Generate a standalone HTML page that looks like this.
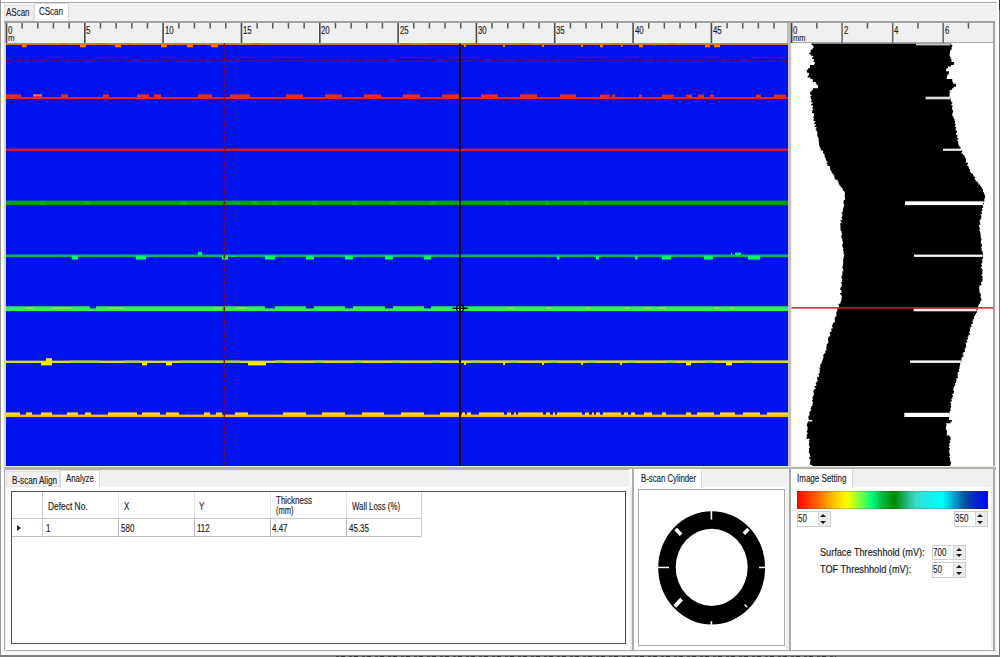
<!DOCTYPE html>
<html><head><meta charset="utf-8"><title>CScan</title>
<style>
html,body{margin:0;padding:0;}
body{width:1000px;height:657px;overflow:hidden;background:#f0f0f0;position:relative;font-family:"Liberation Sans",sans-serif;color:#1a1a1a;}
.a{position:absolute;}
.t{position:absolute;white-space:nowrap;font-size:11px;line-height:12px;transform:scaleX(var(--s,.727));transform-origin:0 50%;color:#1c1c1c;-webkit-text-stroke:.16px #222;}
.rl{position:absolute;top:24.6px;white-space:nowrap;font-size:10.6px;line-height:10px;transform:scaleX(.74);transform-origin:0 50%;color:#1c1c1c;-webkit-text-stroke:.15px #1c1c1c;}
.lb{position:absolute;white-space:nowrap;font-size:11.2px;line-height:13px;transform:scaleX(.818);transform-origin:0 50%;color:#1c1c1c;-webkit-text-stroke:.2px #1c1c1c;}
.num{position:absolute;height:15.6px;background:#fff;border:1px solid #cfcfcf;box-sizing:border-box;}
.num .v{position:absolute;left:.1px;top:.2px;font-size:11px;line-height:12px;transform:scaleX(.73);transform-origin:0 50%;color:#1c1c1c;-webkit-text-stroke:.16px #222;}
.num .sp{position:absolute;right:0;top:0;bottom:0;width:11px;background:#ececec;border-left:1px solid #d8d8d8;}
.num .sp:before{content:"";position:absolute;left:1.9px;top:2.2px;border:3.2px solid transparent;border-top:0;border-bottom:3.6px solid #1a1a1a;}
.num .sp:after{content:"";position:absolute;left:1.9px;bottom:2.2px;border:3.2px solid transparent;border-bottom:0;border-top:3.6px solid #1a1a1a;}
</style></head><body>
<!-- window frame -->
<div class="a" style="left:0;top:0;width:1000px;height:1.8px;background:#fff"></div>
<div class="a" style="left:0;top:1.5px;width:997px;height:1.4px;background:#a4a4a4"></div><div class="a" style="left:1px;top:2.9px;width:996px;height:1.4px;background:#fafafa"></div>
<div class="a" style="left:0;top:0;width:1px;height:657px;background:#9a9a9a"></div>
<div class="a" style="left:1px;top:3px;width:3.2px;height:652px;background:#fafafa"></div>
<div class="a" style="left:998.5px;top:0;width:1.5px;height:657px;background:#727272"></div><div class="a" style="left:998.5px;top:0;width:1.5px;height:10px;background:#2a3050"></div><div class="a" style="left:997px;top:0;width:1.5px;height:657px;background:#fdfdfd"></div>
<div class="a" style="left:995.6px;top:22px;width:2.6px;height:633px;background:#fafafa"></div>
<!-- top tabs -->
<div class="a" style="left:3.6px;top:4.8px;width:30.4px;height:16.7px;border:1px solid #e2e2e2;box-sizing:border-box;background:#f0f0f0"></div>
<div class="a" style="left:34px;top:3.2px;width:35.4px;height:18.3px;background:#fff;border:1px solid #dadada;border-bottom:0;box-sizing:border-box"></div>
<span class="t" style="left:6.3px;top:6.4px">AScan</span>
<span class="t" style="left:39.3px;top:4.6px">CScan</span>
<!-- tab page border -->
<div class="a" style="left:4.2px;top:21.2px;width:990.4px;height:2.3px;background:#a2a2a2"></div>
<div class="a" style="left:4.2px;top:23.4px;width:1.6px;height:444.6px;background:#d6d6cc"></div>

<!-- rulers + scans -->
<div class="a" style="left:787.2px;top:23px;width:1.2px;height:20px;background:#b4b4b4"></div>
<div class="a" style="left:788.4px;top:22.6px;width:3px;height:445.4px;background:#c2c2b8"></div>
<div class="a" style="left:791.6px;top:43.4px;width:201.6px;height:424.4px;background:#fff"></div>
<div class="a" style="left:993px;top:23px;width:1.9px;height:446px;background:#a6a6a6"></div>
<div class="a" style="left:791px;top:42.4px;width:202px;height:1.1px;background:#a8a8a8"></div>
<svg class="a" style="left:0;top:0" width="1000" height="470" viewBox="0 0 1000 470">
<rect x="5.7" y="23" width="1.6" height="20" fill="#4c4c4c"/><rect x="21.4" y="23" width="1.5" height="5.5" fill="#585858"/><rect x="37.1" y="23" width="1.5" height="5.5" fill="#585858"/><rect x="52.7" y="23" width="1.5" height="5.5" fill="#585858"/><rect x="68.4" y="23" width="1.5" height="5.5" fill="#585858"/><rect x="84.0" y="23" width="1.6" height="20" fill="#4c4c4c"/><rect x="99.7" y="23" width="1.5" height="5.5" fill="#585858"/><rect x="115.4" y="23" width="1.5" height="5.5" fill="#585858"/><rect x="131.1" y="23" width="1.5" height="5.5" fill="#585858"/><rect x="146.7" y="23" width="1.5" height="5.5" fill="#585858"/><rect x="162.3" y="23" width="1.6" height="20" fill="#4c4c4c"/><rect x="178.1" y="23" width="1.5" height="5.5" fill="#585858"/><rect x="193.7" y="23" width="1.5" height="5.5" fill="#585858"/><rect x="209.4" y="23" width="1.5" height="5.5" fill="#585858"/><rect x="225.0" y="23" width="1.5" height="5.5" fill="#585858"/><rect x="240.7" y="23" width="1.6" height="20" fill="#4c4c4c"/><rect x="256.4" y="23" width="1.5" height="5.5" fill="#585858"/><rect x="272.0" y="23" width="1.5" height="5.5" fill="#585858"/><rect x="287.7" y="23" width="1.5" height="5.5" fill="#585858"/><rect x="303.4" y="23" width="1.5" height="5.5" fill="#585858"/><rect x="319.0" y="23" width="1.6" height="20" fill="#4c4c4c"/><rect x="334.7" y="23" width="1.5" height="5.5" fill="#585858"/><rect x="350.4" y="23" width="1.5" height="5.5" fill="#585858"/><rect x="366.0" y="23" width="1.5" height="5.5" fill="#585858"/><rect x="381.7" y="23" width="1.5" height="5.5" fill="#585858"/><rect x="397.3" y="23" width="1.6" height="20" fill="#4c4c4c"/><rect x="413.0" y="23" width="1.5" height="5.5" fill="#585858"/><rect x="428.7" y="23" width="1.5" height="5.5" fill="#585858"/><rect x="444.3" y="23" width="1.5" height="5.5" fill="#585858"/><rect x="460.0" y="23" width="1.5" height="5.5" fill="#585858"/><rect x="475.6" y="23" width="1.6" height="20" fill="#4c4c4c"/><rect x="491.3" y="23" width="1.5" height="5.5" fill="#585858"/><rect x="507.0" y="23" width="1.5" height="5.5" fill="#585858"/><rect x="522.7" y="23" width="1.5" height="5.5" fill="#585858"/><rect x="538.3" y="23" width="1.5" height="5.5" fill="#585858"/><rect x="553.9" y="23" width="1.6" height="20" fill="#4c4c4c"/><rect x="569.7" y="23" width="1.5" height="5.5" fill="#585858"/><rect x="585.3" y="23" width="1.5" height="5.5" fill="#585858"/><rect x="601.0" y="23" width="1.5" height="5.5" fill="#585858"/><rect x="616.6" y="23" width="1.5" height="5.5" fill="#585858"/><rect x="632.3" y="23" width="1.6" height="20" fill="#4c4c4c"/><rect x="648.0" y="23" width="1.5" height="5.5" fill="#585858"/><rect x="663.6" y="23" width="1.5" height="5.5" fill="#585858"/><rect x="679.3" y="23" width="1.5" height="5.5" fill="#585858"/><rect x="695.0" y="23" width="1.5" height="5.5" fill="#585858"/><rect x="710.6" y="23" width="1.6" height="20" fill="#4c4c4c"/><rect x="726.3" y="23" width="1.5" height="5.5" fill="#585858"/><rect x="742.0" y="23" width="1.5" height="5.5" fill="#585858"/><rect x="757.6" y="23" width="1.5" height="5.5" fill="#585858"/><rect x="773.3" y="23" width="1.5" height="5.5" fill="#585858"/><rect x="790.8" y="23" width="1.6" height="20" fill="#3c3c3c"/><rect x="816.1" y="23" width="1.5" height="5.5" fill="#585858"/><rect x="841.3" y="23" width="1.6" height="20" fill="#6c6c6c"/><rect x="866.7" y="23" width="1.5" height="5.5" fill="#585858"/><rect x="891.9" y="23" width="1.6" height="20" fill="#6c6c6c"/><rect x="917.2" y="23" width="1.5" height="5.5" fill="#585858"/><rect x="942.4" y="23" width="1.6" height="20" fill="#6c6c6c"/><rect x="967.7" y="23" width="1.5" height="5.5" fill="#585858"/>
<rect x="6.0" y="43.6" width="782.0" height="422.79999999999995" fill="#0012ee"/><rect x="6.0" y="43.0" width="782.0" height="1.9" fill="#d68a14"/><rect x="60.0" y="43.0" width="8.0" height="1.9" fill="#dc6a1c"/><rect x="97.0" y="43.0" width="11.0" height="1.9" fill="#dc6a1c"/><rect x="125.0" y="43.0" width="6.0" height="1.9" fill="#dc6a1c"/><rect x="251.0" y="43.0" width="11.0" height="1.9" fill="#dc6a1c"/><rect x="400.0" y="43.0" width="12.0" height="1.9" fill="#dc6a1c"/><rect x="426.0" y="43.0" width="32.0" height="1.9" fill="#dc6a1c"/><rect x="470.0" y="43.0" width="10.0" height="1.9" fill="#dc6a1c"/><rect x="520.0" y="43.0" width="10.0" height="1.9" fill="#dc6a1c"/><rect x="612.0" y="43.0" width="8.0" height="1.9" fill="#dc6a1c"/><rect x="668.0" y="43.0" width="8.0" height="1.9" fill="#dc6a1c"/><rect x="22.0" y="44.8" width="4.5" height="2.5" fill="#ff7a00"/><rect x="80.0" y="44.8" width="6.0" height="2.5" fill="#ff7a00"/><rect x="115.0" y="44.8" width="6.0" height="2.5" fill="#ff7a00"/><rect x="161.0" y="44.8" width="6.0" height="2.5" fill="#ff7a00"/><rect x="187.0" y="44.8" width="6.0" height="2.5" fill="#ff7a00"/><rect x="211.0" y="44.8" width="7.0" height="2.5" fill="#ff7a00"/><rect x="600.0" y="44.8" width="3.0" height="2.5" fill="#ff7a00"/><rect x="639.0" y="44.8" width="4.0" height="2.5" fill="#ff7a00"/><rect x="705.0" y="44.8" width="5.0" height="2.5" fill="#ff7a00"/><rect x="714.0" y="44.8" width="6.0" height="2.5" fill="#ff7a00"/><rect x="464.0" y="44.8" width="2.0" height="2.2" fill="#ff7a00"/><rect x="503.0" y="44.8" width="2.0" height="2.2" fill="#ff7a00"/><rect x="542.0" y="44.8" width="2.0" height="2.2" fill="#ff7a00"/><rect x="581.0" y="44.8" width="2.0" height="2.2" fill="#ff7a00"/><rect x="621.0" y="44.8" width="1.5" height="2.2" fill="#ff7a00"/><line x1="6.0" y1="61.3" x2="788.0" y2="61.3" stroke="#9a0010" stroke-width="1.6" stroke-dasharray="4.4 1.6 1.45 1.65 1.45 1.6"/><rect x="6.0" y="97.1" width="782.0" height="1.9" fill="#e02828"/><rect x="6.0" y="94.4" width="15.0" height="3.2" fill="#ff2a00"/><rect x="33.0" y="94.4" width="9.0" height="3.2" fill="#ff2a00"/><rect x="61.0" y="94.4" width="7.0" height="3.2" fill="#ff2a00"/><rect x="103.0" y="94.4" width="6.0" height="3.2" fill="#ff2a00"/><rect x="137.0" y="94.4" width="12.0" height="3.2" fill="#ff2a00"/><rect x="154.0" y="94.4" width="7.0" height="3.2" fill="#ff2a00"/><rect x="198.0" y="94.4" width="14.0" height="3.2" fill="#ff2a00"/><rect x="230.0" y="94.4" width="20.0" height="3.2" fill="#ff2a00"/><rect x="286.0" y="94.4" width="17.0" height="3.2" fill="#ff2a00"/><rect x="325.0" y="94.4" width="17.0" height="3.2" fill="#ff2a00"/><rect x="364.0" y="94.4" width="17.0" height="3.2" fill="#ff2a00"/><rect x="403.0" y="94.4" width="17.0" height="3.2" fill="#ff2a00"/><rect x="442.0" y="94.4" width="17.0" height="3.2" fill="#ff2a00"/><rect x="481.0" y="94.4" width="17.0" height="3.2" fill="#ff2a00"/><rect x="520.0" y="94.4" width="17.0" height="3.2" fill="#ff2a00"/><rect x="560.0" y="94.4" width="16.0" height="3.2" fill="#ff2a00"/><rect x="600.0" y="94.6" width="10.0" height="3.0" fill="#ff2a00"/><rect x="612.0" y="94.6" width="3.0" height="3.0" fill="#ff2a00"/><rect x="639.0" y="94.6" width="3.0" height="3.0" fill="#ff2a00"/><rect x="662.0" y="94.6" width="12.0" height="3.0" fill="#ff2a00"/><rect x="686.0" y="94.6" width="6.0" height="3.0" fill="#ff2a00"/><rect x="698.0" y="94.6" width="6.0" height="3.0" fill="#ff2a00"/><rect x="710.0" y="94.6" width="4.0" height="3.0" fill="#ff2a00"/><rect x="756.0" y="94.6" width="5.0" height="3.0" fill="#ff2a00"/><rect x="774.0" y="94.6" width="12.0" height="3.0" fill="#ff2a00"/><rect x="33.0" y="94.4" width="9.0" height="1.6" fill="#ff7800"/><rect x="6.0" y="148.5" width="782.0" height="2.5" fill="#d81432"/><rect x="6.0" y="200.6" width="782.0" height="4.5" fill="#00a00c"/><rect x="40.0" y="201.0" width="6.0" height="3.6" fill="#06ae22"/><rect x="84.0" y="201.0" width="6.0" height="3.6" fill="#06ae22"/><rect x="180.0" y="201.0" width="7.0" height="3.6" fill="#06ae22"/><rect x="232.0" y="201.0" width="8.0" height="3.6" fill="#06ae22"/><rect x="252.0" y="201.0" width="6.0" height="3.6" fill="#06ae22"/><rect x="272.0" y="201.0" width="6.0" height="3.6" fill="#06ae22"/><rect x="312.0" y="201.0" width="6.0" height="3.6" fill="#06ae22"/><rect x="352.0" y="201.0" width="6.0" height="3.6" fill="#06ae22"/><rect x="390.0" y="201.0" width="6.0" height="3.6" fill="#06ae22"/><rect x="430.0" y="201.0" width="6.0" height="3.6" fill="#06ae22"/><rect x="505.0" y="201.0" width="4.0" height="3.6" fill="#06ae22"/><rect x="545.0" y="201.0" width="4.0" height="3.6" fill="#06ae22"/><rect x="584.0" y="201.0" width="4.0" height="3.6" fill="#06ae22"/><rect x="6.0" y="254.5" width="782.0" height="2.6" fill="#04b85c"/><rect x="72.0" y="255.6" width="6.0" height="4.0" fill="#00f866"/><rect x="136.0" y="255.6" width="10.0" height="4.0" fill="#00f866"/><rect x="222.0" y="255.6" width="6.0" height="4.0" fill="#00f866"/><rect x="265.0" y="255.6" width="10.0" height="4.0" fill="#00f866"/><rect x="306.0" y="255.6" width="8.0" height="4.0" fill="#00f866"/><rect x="345.0" y="255.6" width="8.0" height="4.0" fill="#00f866"/><rect x="385.0" y="255.6" width="8.0" height="4.0" fill="#00f866"/><rect x="424.0" y="255.6" width="7.0" height="4.0" fill="#00f866"/><rect x="557.0" y="255.6" width="2.5" height="4.0" fill="#00f866"/><rect x="596.0" y="255.6" width="3.0" height="4.0" fill="#00f866"/><rect x="635.0" y="255.6" width="2.5" height="4.0" fill="#00f866"/><rect x="662.0" y="255.6" width="9.0" height="4.0" fill="#00f866"/><rect x="704.0" y="255.6" width="9.0" height="4.0" fill="#00f866"/><rect x="748.0" y="255.6" width="12.0" height="4.0" fill="#00f866"/><rect x="198.0" y="251.8" width="4.0" height="3.6" fill="#00f866"/><rect x="735.0" y="252.6" width="6.0" height="2.6" fill="#00f866"/><rect x="731.0" y="252.6" width="1.3" height="2.6" fill="#00f866"/><rect x="6.0" y="306.3" width="782.0" height="4.8" fill="#30f05a"/><rect x="90.0" y="306.0" width="6.0" height="2.4" fill="#0012ee"/><rect x="265.0" y="306.0" width="10.0" height="2.4" fill="#0012ee"/><rect x="306.0" y="306.0" width="8.0" height="2.4" fill="#0012ee"/><rect x="345.0" y="306.0" width="8.0" height="2.4" fill="#0012ee"/><rect x="385.0" y="306.0" width="8.0" height="2.4" fill="#0012ee"/><rect x="424.0" y="306.0" width="7.0" height="2.4" fill="#0012ee"/><rect x="25.0" y="307.4" width="8.0" height="1.6" fill="#8ae84a"/><rect x="52.0" y="307.4" width="20.0" height="1.6" fill="#8ae84a"/><rect x="108.0" y="307.4" width="16.0" height="1.6" fill="#8ae84a"/><rect x="215.0" y="307.4" width="7.0" height="1.6" fill="#8ae84a"/><rect x="236.0" y="307.4" width="11.0" height="1.6" fill="#8ae84a"/><rect x="508.0" y="307.4" width="5.0" height="1.6" fill="#8ae84a"/><rect x="546.0" y="307.4" width="6.0" height="1.6" fill="#8ae84a"/><rect x="586.0" y="307.4" width="5.0" height="1.6" fill="#8ae84a"/><rect x="624.0" y="307.4" width="6.0" height="1.6" fill="#8ae84a"/><rect x="644.0" y="307.4" width="8.0" height="1.6" fill="#8ae84a"/><rect x="657.0" y="307.4" width="9.0" height="1.6" fill="#8ae84a"/><rect x="714.0" y="307.4" width="6.0" height="1.6" fill="#8ae84a"/><rect x="730.0" y="307.4" width="5.0" height="1.6" fill="#8ae84a"/><rect x="6.0" y="360.6" width="782.0" height="2.4" fill="#d6dc2c"/><rect x="275" y="360.6" width="513.0" height="2.4" fill="#dcd626"/><rect x="275.6" y="360.6" width="8.0" height="2.4" fill="#9ccc50"/><rect x="314.7" y="360.6" width="8.0" height="2.4" fill="#9ccc50"/><rect x="353.8" y="360.6" width="8.0" height="2.4" fill="#9ccc50"/><rect x="392.9" y="360.6" width="8.0" height="2.4" fill="#9ccc50"/><rect x="432.0" y="360.6" width="8.0" height="2.4" fill="#9ccc50"/><rect x="471.1" y="360.6" width="8.0" height="2.4" fill="#9ccc50"/><rect x="510.2" y="360.6" width="8.0" height="2.4" fill="#9ccc50"/><rect x="549.3" y="360.6" width="8.0" height="2.4" fill="#9ccc50"/><rect x="588.4" y="360.6" width="8.0" height="2.4" fill="#9ccc50"/><rect x="627.5" y="360.6" width="8.0" height="2.4" fill="#9ccc50"/><rect x="666.6" y="360.6" width="8.0" height="2.4" fill="#9ccc50"/><rect x="705.7" y="360.6" width="8.0" height="2.4" fill="#9ccc50"/><rect x="744.8" y="360.6" width="8.0" height="2.4" fill="#9ccc50"/><rect x="70.0" y="360.6" width="30.0" height="2.4" fill="#a8d048"/><rect x="125.0" y="360.6" width="15.0" height="2.4" fill="#a8d048"/><rect x="180.0" y="360.6" width="60.0" height="2.4" fill="#a8d048"/><rect x="41.0" y="362.4" width="11.0" height="3.0" fill="#ffe800"/><rect x="142.0" y="362.4" width="5.0" height="3.0" fill="#ffe800"/><rect x="166.0" y="362.4" width="6.0" height="3.0" fill="#ffe800"/><rect x="248.0" y="362.4" width="18.0" height="3.0" fill="#ffe800"/><rect x="686.0" y="362.4" width="5.0" height="3.0" fill="#ffe800"/><rect x="726.0" y="362.4" width="6.0" height="3.0" fill="#ffe800"/><rect x="46.0" y="358.2" width="6.0" height="3.0" fill="#ffe800"/><rect x="464.0" y="362.4" width="2.0" height="2.4" fill="#ffe800"/><rect x="503.0" y="362.4" width="2.0" height="2.4" fill="#ffe800"/><rect x="542.0" y="362.4" width="2.0" height="2.4" fill="#ffe800"/><rect x="581.0" y="362.4" width="2.0" height="2.4" fill="#ffe800"/><rect x="620.0" y="362.4" width="2.0" height="2.4" fill="#ffe800"/><rect x="6.0" y="414.5" width="782.0" height="2.6" fill="#ecb818"/><rect x="6.0" y="412.4" width="14.0" height="3.0" fill="#ffd81a"/><rect x="26.0" y="412.4" width="6.0" height="3.0" fill="#ffd81a"/><rect x="41.0" y="412.4" width="11.0" height="3.0" fill="#ffd81a"/><rect x="67.0" y="412.4" width="11.0" height="3.0" fill="#ffd81a"/><rect x="85.0" y="412.4" width="6.0" height="3.0" fill="#ffd81a"/><rect x="108.0" y="412.4" width="29.0" height="3.0" fill="#ffd81a"/><rect x="142.0" y="412.4" width="18.0" height="3.0" fill="#ffd81a"/><rect x="166.0" y="412.4" width="13.0" height="3.0" fill="#ffd81a"/><rect x="204.0" y="412.4" width="6.0" height="3.0" fill="#ffd81a"/><rect x="216.0" y="412.4" width="6.0" height="3.0" fill="#ffd81a"/><rect x="235.0" y="412.4" width="13.0" height="3.0" fill="#ffd81a"/><rect x="283.0" y="412.4" width="23.0" height="3.0" fill="#ffd81a"/><rect x="322.0" y="412.4" width="23.0" height="3.0" fill="#ffd81a"/><rect x="362.0" y="412.4" width="22.0" height="3.0" fill="#ffd81a"/><rect x="401.0" y="412.4" width="23.0" height="3.0" fill="#ffd81a"/><rect x="440.0" y="412.4" width="19.0" height="3.0" fill="#ffd81a"/><rect x="462.0" y="412.4" width="3.0" height="3.0" fill="#ffd81a"/><rect x="467.0" y="412.4" width="4.0" height="3.0" fill="#ffd81a"/><rect x="479.0" y="412.4" width="25.0" height="3.0" fill="#ffd81a"/><rect x="507.0" y="412.4" width="4.0" height="3.0" fill="#ffd81a"/><rect x="514.0" y="412.4" width="2.0" height="3.0" fill="#ffd81a"/><rect x="518.0" y="412.4" width="25.0" height="3.0" fill="#ffd81a"/><rect x="546.0" y="412.4" width="4.0" height="3.0" fill="#ffd81a"/><rect x="553.0" y="412.4" width="2.0" height="3.0" fill="#ffd81a"/><rect x="557.0" y="412.4" width="25.0" height="3.0" fill="#ffd81a"/><rect x="585.0" y="412.4" width="4.0" height="3.0" fill="#ffd81a"/><rect x="592.0" y="412.4" width="2.0" height="3.0" fill="#ffd81a"/><rect x="596.0" y="412.4" width="4.0" height="3.0" fill="#ffd81a"/><rect x="603.0" y="412.4" width="18.0" height="3.0" fill="#ffd81a"/><rect x="624.0" y="412.4" width="4.0" height="3.0" fill="#ffd81a"/><rect x="631.0" y="412.4" width="4.0" height="3.0" fill="#ffd81a"/><rect x="644.0" y="412.4" width="8.0" height="3.0" fill="#ffd81a"/><rect x="662.0" y="412.4" width="4.0" height="3.0" fill="#ffd81a"/><rect x="686.0" y="412.4" width="5.0" height="3.0" fill="#ffd81a"/><rect x="697.0" y="412.4" width="17.0" height="3.0" fill="#ffd81a"/><rect x="720.0" y="412.4" width="15.0" height="3.0" fill="#ffd81a"/><rect x="743.0" y="412.4" width="17.0" height="3.0" fill="#ffd81a"/><rect x="767.0" y="412.4" width="21.0" height="3.0" fill="#ffd81a"/><line x1="224.3" y1="43.3" x2="224.3" y2="466.4" stroke="#9a0010" stroke-width="1.5" stroke-dasharray="4.8 1.7 1.6 1.8 1.6 1.67"/><rect x="459" y="43.6" width="2" height="422.79999999999995" fill="#000"/><circle cx="460.1" cy="308.3" r="3.6" fill="none" stroke="#000" stroke-width="1.4"/><rect x="452.6" y="307.6" width="15" height="1.3" fill="#000"/>
<path d="M811.4 43.4 L811.4 44.9 L812.9 44.9 L812.9 46.5 L813.6 46.5 L813.6 48.0 L812.6 48.0 L812.6 49.6 L810.8 49.6 L810.8 51.1 L810.7 51.1 L810.7 52.7 L809.3 52.7 L809.3 54.2 L810.8 54.2 L810.8 55.8 L813.3 55.8 L813.3 57.3 L812.3 57.3 L812.3 58.9 L814.0 58.9 L814.0 60.4 L813.6 60.4 L813.6 62.0 L814.8 62.0 L814.8 63.5 L814.4 63.5 L814.4 65.1 L809.9 65.1 L809.9 66.6 L809.9 66.6 L809.9 68.2 L808.0 68.2 L808.0 69.7 L806.7 69.7 L806.7 71.3 L807.0 71.3 L807.0 72.8 L809.0 72.8 L809.0 74.4 L808.6 74.4 L808.6 75.9 L807.7 75.9 L807.7 77.5 L810.4 77.5 L810.4 79.0 L812.6 79.0 L812.6 80.6 L813.0 80.6 L813.0 82.1 L815.8 82.1 L815.8 83.7 L816.7 83.7 L816.7 85.2 L818.1 85.2 L818.1 86.8 L818.1 86.8 L818.1 88.3 L813.0 88.3 L813.0 89.9 L811.8 89.9 L811.8 91.4 L810.2 91.4 L810.2 93.0 L809.9 93.0 L809.9 94.5 L811.3 94.5 L811.3 96.1 L810.4 96.1 L810.4 97.6 L811.0 97.6 L811.0 99.2 L811.6 99.2 L811.6 100.7 L811.3 100.7 L811.3 102.3 L812.6 102.3 L812.6 103.8 L811.3 103.8 L811.3 105.4 L812.9 105.4 L812.9 106.9 L812.4 106.9 L812.4 108.5 L813.2 108.5 L813.2 110.0 L812.4 110.0 L812.4 111.6 L812.1 111.6 L812.1 113.1 L813.7 113.1 L813.7 114.7 L814.0 114.7 L814.0 116.2 L813.3 116.2 L813.3 117.8 L813.9 117.8 L813.9 119.3 L813.5 119.3 L813.5 120.9 L815.2 120.9 L815.2 122.4 L814.1 122.4 L814.1 124.0 L815.8 124.0 L815.8 125.5 L814.7 125.5 L814.7 127.1 L816.4 127.1 L816.4 128.6 L815.7 128.6 L815.7 130.2 L816.7 130.2 L816.7 131.7 L817.4 131.7 L817.4 133.3 L817.3 133.3 L817.3 134.8 L817.3 134.8 L817.3 136.4 L818.0 136.4 L818.0 137.9 L818.7 137.9 L818.7 139.5 L818.7 139.5 L818.7 141.0 L818.8 141.0 L818.8 142.6 L819.1 142.6 L819.1 144.1 L819.2 144.1 L819.2 145.7 L819.6 145.7 L819.6 147.2 L820.4 147.2 L820.4 148.8 L820.8 148.8 L820.8 150.4 L823.1 150.4 L823.1 151.9 L823.0 151.9 L823.0 153.5 L824.4 153.5 L824.4 155.0 L824.6 155.0 L824.6 156.6 L824.9 156.6 L824.9 158.1 L825.8 158.1 L825.8 159.7 L826.2 159.7 L826.2 161.2 L827.5 161.2 L827.5 162.8 L826.8 162.8 L826.8 164.3 L827.6 164.3 L827.6 165.9 L829.8 165.9 L829.8 167.4 L830.1 167.4 L830.1 169.0 L830.3 169.0 L830.3 170.5 L831.4 170.5 L831.4 172.1 L831.9 172.1 L831.9 173.6 L833.4 173.6 L833.4 175.2 L834.3 175.2 L834.3 176.7 L834.3 176.7 L834.3 178.3 L835.2 178.3 L835.2 179.8 L837.6 179.8 L837.6 181.4 L838.5 181.4 L838.5 182.9 L838.7 182.9 L838.7 184.5 L839.7 184.5 L839.7 186.0 L840.7 186.0 L840.7 187.6 L842.4 187.6 L842.4 189.1 L842.9 189.1 L842.9 190.7 L844.3 190.7 L844.3 192.2 L844.9 192.2 L844.9 193.8 L844.9 193.8 L844.9 195.3 L844.6 195.3 L844.6 196.9 L845.0 196.9 L845.0 198.4 L845.0 198.4 L845.0 200.0 L843.7 200.0 L843.7 201.5 L843.4 201.5 L843.4 203.1 L843.8 203.1 L843.8 204.6 L844.2 204.6 L844.2 206.2 L843.6 206.2 L843.6 207.7 L843.1 207.7 L843.1 209.3 L843.1 209.3 L843.1 210.8 L842.6 210.8 L842.6 212.4 L841.7 212.4 L841.7 213.9 L842.5 213.9 L842.5 215.5 L842.0 215.5 L842.0 217.0 L841.5 217.0 L841.5 218.6 L842.2 218.6 L842.2 220.1 L840.6 220.1 L840.6 221.7 L841.4 221.7 L841.4 223.2 L840.2 223.2 L840.2 224.8 L840.4 224.8 L840.4 226.3 L840.5 226.3 L840.5 227.9 L840.5 227.9 L840.5 229.4 L840.7 229.4 L840.7 231.0 L841.5 231.0 L841.5 232.5 L841.7 232.5 L841.7 234.1 L841.9 234.1 L841.9 235.6 L841.1 235.6 L841.1 237.2 L841.7 237.2 L841.7 238.7 L842.4 238.7 L842.4 240.3 L842.5 240.3 L842.5 241.8 L843.0 241.8 L843.0 243.4 L842.4 243.4 L842.4 244.9 L842.2 244.9 L842.2 246.5 L842.8 246.5 L842.8 248.0 L843.4 248.0 L843.4 249.6 L843.0 249.6 L843.0 251.1 L843.6 251.1 L843.6 252.7 L843.5 252.7 L843.5 254.2 L844.1 254.2 L844.1 255.8 L843.8 255.8 L843.8 257.3 L843.6 257.3 L843.6 258.9 L843.1 258.9 L843.1 260.4 L843.3 260.4 L843.3 262.0 L843.2 262.0 L843.2 263.5 L843.0 263.5 L843.0 265.1 L842.8 265.1 L842.8 266.6 L842.3 266.6 L842.3 268.2 L843.1 268.2 L843.1 269.7 L843.4 269.7 L843.4 271.3 L842.3 271.3 L842.3 272.8 L842.4 272.8 L842.4 274.4 L842.3 274.4 L842.3 275.9 L841.4 275.9 L841.4 277.5 L841.7 277.5 L841.7 279.0 L842.1 279.0 L842.1 280.6 L842.2 280.6 L842.2 282.1 L841.3 282.1 L841.3 283.7 L841.8 283.7 L841.8 285.2 L841.6 285.2 L841.6 286.8 L840.7 286.8 L840.7 288.3 L840.2 288.3 L840.2 289.9 L841.3 289.9 L841.3 291.4 L841.5 291.4 L841.5 293.0 L840.2 293.0 L840.2 294.5 L841.3 294.5 L841.3 296.1 L841.8 296.1 L841.8 297.6 L841.5 297.6 L841.5 299.2 L841.5 299.2 L841.5 300.7 L840.9 300.7 L840.9 302.3 L840.3 302.3 L840.3 303.8 L838.6 303.8 L838.6 305.4 L839.1 305.4 L839.1 306.9 L838.7 306.9 L838.7 308.5 L837.3 308.5 L837.3 310.0 L837.3 310.0 L837.3 311.6 L836.4 311.6 L836.4 313.1 L836.3 313.1 L836.3 314.7 L836.5 314.7 L836.5 316.2 L835.4 316.2 L835.4 317.8 L834.6 317.8 L834.6 319.3 L834.8 319.3 L834.8 320.9 L835.0 320.9 L835.0 322.4 L833.0 322.4 L833.0 324.0 L832.5 324.0 L832.5 325.5 L831.9 325.5 L831.9 327.1 L832.7 327.1 L832.7 328.6 L831.2 328.6 L831.2 330.2 L831.6 330.2 L831.6 331.7 L829.7 331.7 L829.7 333.3 L830.0 333.3 L830.0 334.8 L830.2 334.8 L830.2 336.4 L828.4 336.4 L828.4 337.9 L828.0 337.9 L828.0 339.5 L828.0 339.5 L828.0 341.0 L828.5 341.0 L828.5 342.6 L827.7 342.6 L827.7 344.1 L826.7 344.1 L826.7 345.7 L826.6 345.7 L826.6 347.2 L826.2 347.2 L826.2 348.8 L826.5 348.8 L826.5 350.3 L825.4 350.3 L825.4 351.9 L825.3 351.9 L825.3 353.4 L823.8 353.4 L823.8 355.0 L823.2 355.0 L823.2 356.5 L823.6 356.5 L823.6 358.1 L823.0 358.1 L823.0 359.6 L822.4 359.6 L822.4 361.2 L821.8 361.2 L821.8 362.7 L821.2 362.7 L821.2 364.3 L820.2 364.3 L820.2 365.8 L820.3 365.8 L820.3 367.4 L819.6 367.4 L819.6 368.9 L819.9 368.9 L819.9 370.5 L819.6 370.5 L819.6 372.0 L819.6 372.0 L819.6 373.6 L818.5 373.6 L818.5 375.1 L819.0 375.1 L819.0 376.7 L817.2 376.7 L817.2 378.2 L817.1 378.2 L817.1 379.8 L817.7 379.8 L817.7 381.3 L816.5 381.3 L816.5 382.9 L815.8 382.9 L815.8 384.4 L816.4 384.4 L816.4 386.0 L814.5 386.0 L814.5 387.5 L815.5 387.5 L815.5 389.1 L814.4 389.1 L814.4 390.6 L813.3 390.6 L813.3 392.2 L813.6 392.2 L813.6 393.7 L814.0 393.7 L814.0 395.3 L813.1 395.3 L813.1 396.8 L812.6 396.8 L812.6 398.4 L812.7 398.4 L812.7 399.9 L812.1 399.9 L812.1 401.5 L812.9 401.5 L812.9 403.0 L812.7 403.0 L812.7 404.6 L812.4 404.6 L812.4 406.1 L811.3 406.1 L811.3 407.7 L810.6 407.7 L810.6 409.2 L811.2 409.2 L811.2 410.8 L809.8 410.8 L809.8 412.3 L809.4 412.3 L809.4 413.9 L809.6 413.9 L809.6 415.4 L808.6 415.4 L808.6 417.0 L808.2 417.0 L808.2 418.5 L808.9 418.5 L808.9 420.1 L812.2 420.1 L812.2 421.6 L807.8 421.6 L807.8 423.2 L807.0 423.2 L807.0 424.7 L806.9 424.7 L806.9 426.3 L807.5 426.3 L807.5 427.8 L807.6 427.8 L807.6 429.4 L807.2 429.4 L807.2 430.9 L806.7 430.9 L806.7 432.5 L807.6 432.5 L807.6 434.0 L806.7 434.0 L806.7 435.6 L806.8 435.6 L806.8 437.1 L806.6 437.1 L806.6 438.7 L809.5 438.7 L809.5 440.2 L808.9 440.2 L808.9 441.8 L809.4 441.8 L809.4 443.3 L808.9 443.3 L808.9 444.9 L809.2 444.9 L809.2 446.4 L809.7 446.4 L809.7 448.0 L809.0 448.0 L809.0 449.5 L809.2 449.5 L809.2 451.1 L808.8 451.1 L808.8 452.6 L809.4 452.6 L809.4 454.2 L810.0 454.2 L810.0 455.7 L810.3 455.7 L810.3 457.3 L809.1 457.3 L809.1 458.8 L810.4 458.8 L810.4 460.4 L810.4 460.4 L810.4 461.9 L809.9 461.9 L809.9 463.5 L810.3 463.5 L810.3 465.0 L812.2 465.0 L812.2 466.2 L950.1 466.2 L950.1 465.0 L950.5 465.0 L950.5 463.5 L951.1 463.5 L951.1 461.9 L950.3 461.9 L950.3 460.4 L950.1 460.4 L950.1 458.8 L950.0 458.8 L950.0 457.3 L949.1 457.3 L949.1 455.7 L950.0 455.7 L950.0 454.2 L949.5 454.2 L949.5 452.6 L949.2 452.6 L949.2 451.1 L949.2 451.1 L949.2 449.5 L949.8 449.5 L949.8 448.0 L948.8 448.0 L948.8 446.4 L949.5 446.4 L949.5 444.9 L949.2 444.9 L949.2 443.3 L950.2 443.3 L950.2 441.8 L949.7 441.8 L949.7 440.2 L950.6 440.2 L950.6 438.7 L950.5 438.7 L950.5 437.1 L949.7 437.1 L949.7 435.6 L946.8 435.6 L946.8 434.0 L946.8 434.0 L946.8 432.5 L947.0 432.5 L947.0 430.9 L946.5 430.9 L946.5 429.4 L945.9 429.4 L945.9 427.8 L946.0 427.8 L946.0 426.3 L946.5 426.3 L946.5 424.7 L946.2 424.7 L946.2 423.2 L950.6 423.2 L950.6 421.6 L952.1 421.6 L952.1 420.1 L948.9 420.1 L948.9 418.5 L949.0 418.5 L949.0 417.0 L949.4 417.0 L949.4 415.4 L949.3 415.4 L949.3 413.9 L949.4 413.9 L949.4 412.3 L949.9 412.3 L949.9 410.8 L950.7 410.8 L950.7 409.2 L950.5 409.2 L950.5 407.7 L951.1 407.7 L951.1 406.1 L950.8 406.1 L950.8 404.6 L951.1 404.6 L951.1 403.0 L950.4 403.0 L950.4 401.5 L951.7 401.5 L951.7 399.9 L951.4 399.9 L951.4 398.4 L952.3 398.4 L952.3 396.8 L953.0 396.8 L953.0 395.3 L952.3 395.3 L952.3 393.7 L953.7 393.7 L953.7 392.2 L954.1 392.2 L954.1 390.6 L953.2 390.6 L953.2 389.1 L953.6 389.1 L953.6 387.5 L954.1 387.5 L954.1 386.0 L955.3 386.0 L955.3 384.4 L955.0 384.4 L955.0 382.9 L956.1 382.9 L956.1 381.3 L956.4 381.3 L956.4 379.8 L956.4 379.8 L956.4 378.2 L957.8 378.2 L957.8 376.7 L957.7 376.7 L957.7 375.1 L957.7 375.1 L957.7 373.6 L957.7 373.6 L957.7 372.0 L959.1 372.0 L959.1 370.5 L958.9 370.5 L958.9 368.9 L959.4 368.9 L959.4 367.4 L959.6 367.4 L959.6 365.8 L960.1 365.8 L960.1 364.3 L960.2 364.3 L960.2 362.7 L961.4 362.7 L961.4 361.2 L961.5 361.2 L961.5 359.6 L961.4 359.6 L961.4 358.1 L962.2 358.1 L962.2 356.5 L963.6 356.5 L963.6 355.0 L962.6 355.0 L962.6 353.4 L963.4 353.4 L963.4 351.9 L964.9 351.9 L964.9 350.3 L964.6 350.3 L964.6 348.8 L965.4 348.8 L965.4 347.2 L966.2 347.2 L966.2 345.7 L966.0 345.7 L966.0 344.1 L965.8 344.1 L965.8 342.6 L967.2 342.6 L967.2 341.0 L966.7 341.0 L966.7 339.5 L967.9 339.5 L967.9 337.9 L967.6 337.9 L967.6 336.4 L968.5 336.4 L968.5 334.8 L969.9 334.8 L969.9 333.3 L969.0 333.3 L969.0 331.7 L970.2 331.7 L970.2 330.2 L969.9 330.2 L969.9 328.6 L970.4 328.6 L970.4 327.1 L971.5 327.1 L971.5 325.5 L971.3 325.5 L971.3 324.0 L972.8 324.0 L972.8 322.4 L972.6 322.4 L972.6 320.9 L972.7 320.9 L972.7 319.3 L974.0 319.3 L974.0 317.8 L973.8 317.8 L973.8 316.2 L975.0 316.2 L975.0 314.7 L975.9 314.7 L975.9 313.1 L976.8 313.1 L976.8 311.6 L977.2 311.6 L977.2 310.0 L977.6 310.0 L977.6 308.5 L977.0 308.5 L977.0 306.9 L978.2 306.9 L978.2 305.4 L978.8 305.4 L978.8 303.8 L980.0 303.8 L980.0 302.3 L980.3 302.3 L980.3 300.7 L981.5 300.7 L981.5 299.2 L981.2 299.2 L981.2 297.6 L980.5 297.6 L980.5 296.1 L980.9 296.1 L980.9 294.5 L980.6 294.5 L980.6 293.0 L979.6 293.0 L979.6 291.4 L979.3 291.4 L979.3 289.9 L979.4 289.9 L979.4 288.3 L979.2 288.3 L979.2 286.8 L979.6 286.8 L979.6 285.2 L981.4 285.2 L981.4 283.7 L981.1 283.7 L981.1 282.1 L982.2 282.1 L982.2 280.6 L982.7 280.6 L982.7 279.0 L982.4 279.0 L982.4 277.5 L982.6 277.5 L982.6 275.9 L981.5 275.9 L981.5 274.4 L982.4 274.4 L982.4 272.8 L982.3 272.8 L982.3 271.3 L982.6 271.3 L982.6 269.7 L981.8 269.7 L981.8 268.2 L981.0 268.2 L981.0 266.6 L981.9 266.6 L981.9 265.1 L981.3 265.1 L981.3 263.5 L982.2 263.5 L982.2 262.0 L982.3 262.0 L982.3 260.4 L982.2 260.4 L982.2 258.9 L983.0 258.9 L983.0 257.3 L982.8 257.3 L982.8 255.8 L982.9 255.8 L982.9 254.2 L983.1 254.2 L983.1 252.7 L982.5 252.7 L982.5 251.1 L981.7 251.1 L981.7 249.6 L981.5 249.6 L981.5 248.0 L981.3 248.0 L981.3 246.5 L981.9 246.5 L981.9 244.9 L981.8 244.9 L981.8 243.4 L980.7 243.4 L980.7 241.8 L981.0 241.8 L981.0 240.3 L981.5 240.3 L981.5 238.7 L980.8 238.7 L980.8 237.2 L980.9 237.2 L980.9 235.6 L980.4 235.6 L980.4 234.1 L980.5 234.1 L980.5 232.5 L980.0 232.5 L980.0 231.0 L979.4 231.0 L979.4 229.4 L979.9 229.4 L979.9 227.9 L979.3 227.9 L979.3 226.3 L979.1 226.3 L979.1 224.8 L980.3 224.8 L980.3 223.2 L979.9 223.2 L979.9 221.7 L979.7 221.7 L979.7 220.1 L980.6 220.1 L980.6 218.6 L981.2 218.6 L981.2 217.0 L981.4 217.0 L981.4 215.5 L980.6 215.5 L980.6 213.9 L981.9 213.9 L981.9 212.4 L981.5 212.4 L981.5 210.8 L982.4 210.8 L982.4 209.3 L982.0 209.3 L982.0 207.7 L983.2 207.7 L983.2 206.2 L982.8 206.2 L982.8 204.6 L983.8 204.6 L983.8 203.1 L983.1 203.1 L983.1 201.5 L984.4 201.5 L984.4 200.0 L984.3 200.0 L984.3 198.4 L985.0 198.4 L985.0 196.9 L985.1 196.9 L985.1 195.3 L984.5 195.3 L984.5 193.8 L984.0 193.8 L984.0 192.2 L983.0 192.2 L983.0 190.7 L983.0 190.7 L983.0 189.1 L982.1 189.1 L982.1 187.6 L981.1 187.6 L981.1 186.0 L980.1 186.0 L980.1 184.5 L978.4 184.5 L978.4 182.9 L977.7 182.9 L977.7 181.4 L975.7 181.4 L975.7 179.8 L974.7 179.8 L974.7 178.3 L975.1 178.3 L975.1 176.7 L973.7 176.7 L973.7 175.2 L973.1 175.2 L973.1 173.6 L970.8 173.6 L970.8 172.1 L970.1 172.1 L970.1 170.5 L970.1 170.5 L970.1 169.0 L969.1 169.0 L969.1 167.4 L968.4 167.4 L968.4 165.9 L967.3 165.9 L967.3 164.3 L968.0 164.3 L968.0 162.8 L965.9 162.8 L965.9 161.2 L966.1 161.2 L966.1 159.7 L965.8 159.7 L965.8 158.1 L965.1 158.1 L965.1 156.6 L964.4 156.6 L964.4 155.0 L962.9 155.0 L962.9 153.5 L961.5 153.5 L961.5 151.9 L962.2 151.9 L962.2 150.4 L960.1 150.4 L960.1 148.8 L960.7 148.8 L960.7 147.2 L959.6 147.2 L959.6 145.7 L958.6 145.7 L958.6 144.1 L958.3 144.1 L958.3 142.6 L958.0 142.6 L958.0 141.0 L957.3 141.0 L957.3 139.5 L958.3 139.5 L958.3 137.9 L957.0 137.9 L957.0 136.4 L957.3 136.4 L957.3 134.8 L956.0 134.8 L956.0 133.3 L957.1 133.3 L957.1 131.7 L956.8 131.7 L956.8 130.2 L955.5 130.2 L955.5 128.6 L956.2 128.6 L956.2 127.1 L954.9 127.1 L954.9 125.5 L955.6 125.5 L955.6 124.0 L954.9 124.0 L954.9 122.4 L955.0 122.4 L955.0 120.9 L954.6 120.9 L954.6 119.3 L953.9 119.3 L953.9 117.8 L953.3 117.8 L953.3 116.2 L952.3 116.2 L952.3 114.7 L952.4 114.7 L952.4 113.1 L952.8 113.1 L952.8 111.6 L953.1 111.6 L953.1 110.0 L952.2 110.0 L952.2 108.5 L952.1 108.5 L952.1 106.9 L952.6 106.9 L952.6 105.4 L951.4 105.4 L951.4 103.8 L952.3 103.8 L952.3 102.3 L951.3 102.3 L951.3 100.7 L950.7 100.7 L950.7 99.2 L950.5 99.2 L950.5 97.6 L949.4 97.6 L949.4 96.1 L949.6 96.1 L949.6 94.5 L949.5 94.5 L949.5 93.0 L950.1 93.0 L950.1 91.4 L949.5 91.4 L949.5 89.9 L952.1 89.9 L952.1 88.3 L953.7 88.3 L953.7 86.8 L955.9 86.8 L955.9 85.2 L955.9 85.2 L955.9 83.7 L953.1 83.7 L953.1 82.1 L952.4 82.1 L952.4 80.6 L952.2 80.6 L952.2 79.0 L946.7 79.0 L946.7 77.5 L947.0 77.5 L947.0 75.9 L947.3 75.9 L947.3 74.4 L948.7 74.4 L948.7 72.8 L949.0 72.8 L949.0 71.3 L946.1 71.3 L946.1 69.7 L946.3 69.7 L946.3 68.2 L948.1 68.2 L948.1 66.6 L951.0 66.6 L951.0 65.1 L953.7 65.1 L953.7 63.5 L954.2 63.5 L954.2 62.0 L951.5 62.0 L951.5 60.4 L951.4 60.4 L951.4 58.9 L950.8 58.9 L950.8 57.3 L950.0 57.3 L950.0 55.8 L949.5 55.8 L949.5 54.2 L949.8 54.2 L949.8 52.7 L949.9 52.7 L949.9 51.1 L950.6 51.1 L950.6 49.6 L951.8 49.6 L951.8 48.0 L951.7 48.0 L951.7 46.5 L952.3 46.5 L952.3 44.9 L951.2 44.9 L951.2 43.4Z" fill="#000"/><rect x="916" y="43.5" width="34.4" height="1.9" fill="#cacaca"/><rect x="925.5" y="96.7" width="24.8" height="2.6" fill="#e0e0e0"/><rect x="943" y="148.7" width="18.0" height="2.1" fill="#f4f4f4"/><rect x="905" y="201.3" width="78.0" height="3.8" fill="#fff"/><rect x="914" y="254.6" width="68.6" height="2.3" fill="#f4f4f4"/><rect x="913.6" y="308.5" width="63.0" height="2.8" fill="#f4f4f4"/><rect x="910.1" y="360.4" width="51.3" height="2.5" fill="#f4f4f4"/><rect x="904.3" y="412.8" width="45.3" height="4.2" fill="#fff"/><rect x="791.5" y="307.1" width="202" height="1.5" fill="#be2a2a"/>
</svg>
<span class="rl" style="left:8.0px">0</span><span class="rl" style="left:86.3px">5</span><span class="rl" style="left:164.6px">10</span><span class="rl" style="left:243.0px">15</span><span class="rl" style="left:321.3px">20</span><span class="rl" style="left:399.6px">25</span><span class="rl" style="left:477.9px">30</span><span class="rl" style="left:556.2px">35</span><span class="rl" style="left:634.6px">40</span><span class="rl" style="left:712.9px">45</span>
<span class="rl" style="left:793.2px">0</span><span class="rl" style="left:843.7px">2</span><span class="rl" style="left:894.3px">4</span><span class="rl" style="left:944.8px">6</span>
<span class="rl" style="left:7.8px;top:33.2px;font-size:9.4px;transform:scaleX(.84)">m</span>
<span class="rl" style="left:793px;top:33.2px;font-size:9.4px;transform:scaleX(.8)">mm</span>
<!-- separator under scans -->
<div class="a" style="left:4.2px;top:466.4px;width:991px;height:1.2px;background:#ecece6"></div>
<div class="a" style="left:4.2px;top:467.4px;width:991.4px;height:2.4px;background:#b4b4ae"></div>
<!-- Panel A -->
<div class="a" style="left:4.2px;top:469.4px;width:1.3px;height:182px;background:#acacac"></div>
<div class="a" style="left:5.5px;top:487.4px;width:626.5px;height:162.6px;background:#fff"></div>
<div class="a" style="left:5.5px;top:649.8px;width:628px;height:1.7px;background:#b0b0b0"></div>
<div class="a" style="left:629.5px;top:487.4px;width:2.3px;height:162.6px;background:#ececec"></div><div class="a" style="left:631.9px;top:469.4px;width:2.5px;height:182px;background:#acacac"></div>
<div class="a" style="left:629.4px;top:469.4px;width:2.6px;height:18px;background:#fafafa"></div>
<div class="a" style="left:6px;top:471.4px;width:54px;height:16px;border:1px solid #e2e2e2;box-sizing:border-box;background:#f0f0f0"></div>
<div class="a" style="left:60px;top:469.6px;width:39.6px;height:18.4px;background:#fff;border:1px solid #dadada;border-bottom:0;box-sizing:border-box"></div>
<span class="t" style="left:11.8px;top:473.7px;--s:.735">B-scan Align</span>
<span class="t" style="left:65.6px;top:472.2px;--s:.71">Analyze</span>
<!-- grid -->
<div class="a" style="left:11px;top:490.8px;width:615.4px;height:153.4px;border:1.4px solid #505050;box-sizing:border-box;background:#fff"></div>
<div class="a" style="left:12.2px;top:517.8px;width:409.6px;height:1px;background:#c8c8c8"></div>
<div class="a" style="left:12.2px;top:536.2px;width:409.6px;height:1px;background:#bdbdbd"></div>
<div class="a" style="left:41.8px;top:492px;width:1px;height:45px;background:#c8c8c8"></div>
<div class="a" style="left:118.4px;top:492px;width:1px;height:26px;background:#e4e4e4"></div>
<div class="a" style="left:193.8px;top:492px;width:1px;height:26px;background:#e4e4e4"></div>
<div class="a" style="left:269.8px;top:492px;width:1px;height:26px;background:#e4e4e4"></div>
<div class="a" style="left:346px;top:492px;width:1px;height:26px;background:#e4e4e4"></div>
<div class="a" style="left:421px;top:492px;width:1px;height:45px;background:#d4d4d4"></div>
<div class="a" style="left:118.4px;top:518px;width:1px;height:19px;background:#b8b8b8"></div>
<div class="a" style="left:193.8px;top:518px;width:1px;height:19px;background:#b8b8b8"></div>
<div class="a" style="left:269.8px;top:518px;width:1px;height:19px;background:#b8b8b8"></div>
<div class="a" style="left:346px;top:518px;width:1px;height:19px;background:#b8b8b8"></div>
<span class="t" style="left:48.2px;top:500.2px;--s:.764">Defect No.</span>
<span class="t" style="left:123.6px;top:500.4px">X</span>
<span class="t" style="left:199px;top:500.4px">Y</span>
<span class="t" style="left:276.2px;top:494.2px">Thickness</span>
<span class="t" style="left:276.2px;top:504.4px;--s:.68">(mm)</span>
<span class="t" style="left:351.6px;top:500.2px;--s:.712">Wall Loss (%)</span>
<div class="a" style="left:17px;top:524.6px;border:3.6px solid transparent;border-right:0;border-left:4.6px solid #222"></div>
<span class="t" style="left:46px;top:522.2px">1</span>
<span class="t" style="left:120.8px;top:522.2px">580</span>
<span class="t" style="left:196.6px;top:522.2px">112</span>
<span class="t" style="left:272.4px;top:522.2px">4.47</span>
<span class="t" style="left:348.6px;top:522.2px">45.35</span>
<!-- Panel B -->
<div class="a" style="left:634.4px;top:469.4px;width:154.4px;height:180.6px;background:#fff"></div>
<div class="a" style="left:701.6px;top:469.4px;width:87.2px;height:18px;background:#f0f0f0"></div>
<div class="a" style="left:701.2px;top:469.6px;width:1px;height:18px;background:#dadada"></div>
<div class="a" style="left:634.2px;top:649.8px;width:157px;height:1.7px;background:#b0b0b0"></div>
<div class="a" style="left:786px;top:487.4px;width:2.6px;height:162.6px;background:#efefef"></div><div class="a" style="left:788.7px;top:469.4px;width:2.7px;height:182px;background:#acacac"></div>
<span class="t" style="left:640.6px;top:472.2px;--s:.708">B-scan Cylinder</span>
<div class="a" style="left:637.8px;top:489.3px;width:147.1px;height:156.5px;border:1.8px solid #a8a8a8;box-sizing:border-box;background:#fff"></div>
<svg class="a" style="left:0;top:0" width="1000" height="657" viewBox="0 0 1000 657"><path fill="#000" fill-rule="evenodd" d="M658.2 567.8a53.5 56.6 0 1 0 107 0a53.5 56.6 0 1 0 -107 0Z M675.7 567.3a36 38.6 0 1 0 72 0a36 38.6 0 1 0 -72 0Z"/><rect x="710.6" y="510" width="1.6" height="9.6" fill="#fff"/><rect x="710.6" y="621.2" width="1.6" height="4" fill="#fff"/><rect x="657" y="566.7" width="12" height="1.5" fill="#fff"/><rect x="759" y="566.7" width="7" height="1.5" fill="#fff"/><rect x="-4.0" y="-1.9" width="8" height="3.8" fill="#fff" transform="translate(678.4 531.9) rotate(-133.1)"/><rect x="-3.25" y="-1.8" width="6.5" height="3.6" fill="#fff" transform="translate(746.2 531.3) rotate(-46.4)"/><rect x="-5.0" y="-1.9" width="10" height="3.8" fill="#fff" transform="translate(678.2 602.8) rotate(133.5)"/><rect x="-2.0" y="-0.7" width="4" height="1.4" fill="#fff" transform="translate(746 605.9) rotate(48.2)"/></svg>
<!-- Panel C -->
<div class="a" style="left:791.4px;top:469.4px;width:202.2px;height:180.6px;background:#fff"></div>
<div class="a" style="left:852px;top:469.4px;width:141.6px;height:18px;background:#f0f0f0"></div>
<div class="a" style="left:851.6px;top:469.6px;width:1px;height:18px;background:#dadada"></div>
<div class="a" style="left:990.6px;top:487.4px;width:2.4px;height:162px;background:#ececec"></div>
<div class="a" style="left:790.6px;top:649.8px;width:205px;height:1.7px;background:#b0b0b0"></div>
<div class="a" style="left:993px;top:469.4px;width:2.2px;height:182px;background:#acacac"></div>
<span class="t" style="left:797px;top:472.2px;--s:.728">Image Setting</span>
<div class="a" style="left:796.8px;top:491.4px;width:190.8px;height:17.8px;background:linear-gradient(90deg,#ff0000 0%,#ff6a00 11%,#ffc800 20%,#ffff00 26%,#7cff3c 33%,#00ff78 39%,#00b43c 45%,#008a00 51%,#1cb478 57%,#3cdcc8 62%,#14f0f0 70%,#00ffff 76%,#0096c8 83%,#0050a0 88%,#0020d0 94%,#0000ff 100%);box-shadow:inset 0 0 0 .6px rgba(90,60,60,.5)"></div>
<div class="num" style="left:797px;top:511.2px;width:33.6px"><span class="v">50</span><span class="sp"></span></div>
<div class="num" style="left:953.8px;top:511.2px;width:33.8px"><span class="v">350</span><span class="sp"></span></div>
<span class="lb" style="left:820.4px;top:545.9px">Surface Threshhold (mV):</span>
<span class="lb" style="left:820.4px;top:563px">TOF Threshhold (mV):</span>
<div class="num" style="left:931.6px;top:544.8px;width:34.4px"><span class="v">700</span><span class="sp"></span></div>
<div class="num" style="left:931.6px;top:562.2px;width:34.4px"><span class="v">50</span><span class="sp"></span></div>
<!-- bottom frame -->
<div class="a" style="left:1px;top:651.5px;width:997px;height:3.3px;background:#fbfbfb"></div>
<div class="a" style="left:0;top:654.8px;width:1000px;height:2.2px;background:#7e7e7e"></div><div class="a" style="left:336px;top:656px;width:500px;height:1px;background:repeating-linear-gradient(90deg,#444 0 3px,#777 3px 5px,#333 5px 9px,#808080 9px 13px)"></div>
</body></html>
